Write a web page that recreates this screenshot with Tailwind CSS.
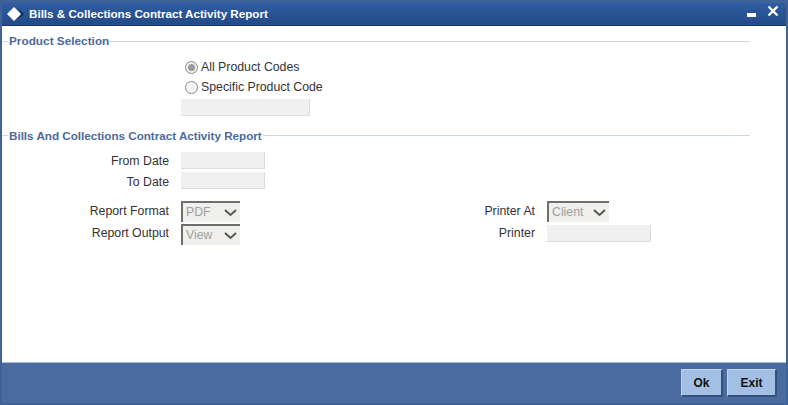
<!DOCTYPE html>
<html lang="en">
<head>
  <meta charset="UTF-8">
  <title>Bills &amp; Collections Contract Activity Report</title>
  <script src="https://cdn.jsdelivr.net/npm/@tailwindcss/browser@4"></script>
</head>
<body class="bg-white overflow-hidden font-['Liberation_Sans',Arial,sans-serif] text-[12.3px] text-[#333]">
  <div class="w-[788px] h-[405px] flex flex-col bg-[#3f6399] pt-[3px] px-[2px] pb-[2px]">

    <!-- title bar -->
    <div class="h-[23px] shrink-0 flex items-center pl-[5px] pr-[2px] bg-gradient-to-b from-[#2f5da3] to-[#234a86] border-b border-[#173564] text-white">
      <svg width="18" height="16" viewBox="0 0 18 16" class="shrink-0">
        <path d="M7 1 L14 8 L7 15 L0 8 Z" fill="#fff"/>
        <path d="M11 2.5 L17 8 L11 13.500 L14.500 8 Z" fill="#0d2a55"/>
      </svg>
      <span class="ml-[4px] font-bold text-[11.65px]">Bills &amp; Collections Contract Activity Report</span>
      <div class="ml-auto flex items-start h-full">
        <span class="block w-[9px] h-[4px] bg-white mt-[10px]"></span>
        <svg width="12" height="12" viewBox="0 0 12 12" class="ml-[11px] mt-[2px] mr-[5px]">
          <path d="M1.5 1.5 L10.5 10.500 M10.5 1.5 L1.5 10.500" stroke="#fff" stroke-width="2.4"/>
        </svg>
      </div>
    </div>

    <!-- body -->
    <div class="flex-1 bg-white pt-[8px]">
      <div class="flex items-center w-[748px] h-[14px]">
        <span class="w-[6px] h-px bg-[#cdd8e0]"></span>
        <span class="mx-[1px] pt-[2px] font-bold text-[11.8px] text-[#4b6a9b]">Product Selection</span>
        <span class="flex-1 h-px bg-[#cdd8e0]"></span>
      </div>

      <div class="ml-[179px] mt-[9px]">
        <label class="flex items-center h-[20px]">
          <span class="ml-[4px] w-[13px] h-[13px] rounded-full border border-[#8a8a8a] bg-[#f0f0f0] flex items-center justify-center">
            <span class="block w-[7px] h-[7px] rounded-full bg-[#9a9a9a]"></span>
          </span>
          <span class="ml-[3px]">All Product Codes</span>
        </label>
        <label class="flex items-center h-[20px]">
          <span class="ml-[4px] w-[13px] h-[13px] rounded-full border border-[#8a8a8a] bg-[#f4f4f4]"></span>
          <span class="ml-[3px]">Specific Product Code</span>
        </label>
        <div class="mt-[2px] w-[129px] h-[17px] bg-[#f0f0f0] border-b border-r border-[#dcdcdc]"></div>
      </div>

      <div class="flex items-center w-[748px] h-[14px] mt-[12px]">
        <span class="w-[6px] h-px bg-[#cdd8e0]"></span>
        <span class="mx-[1px] pt-[2px] font-bold text-[11.65px] text-[#4b6a9b]">Bills And Collections Contract Activity Report</span>
        <span class="flex-1 h-px bg-[#cdd8e0]"></span>
      </div>

      <div class="mt-[10px] flex flex-col gap-[3px]">
        <div class="flex items-center h-[17px]">
          <span class="w-[167px] text-right pt-[2px]">From Date</span>
          <div class="ml-[12px] w-[84px] h-[17px] bg-[#f0f0f0] border-b border-r border-[#dcdcdc]"></div>
        </div>
        <div class="flex items-center h-[17px]">
          <span class="w-[167px] text-right pt-[3px]">To Date</span>
          <div class="ml-[12px] w-[84px] h-[17px] bg-[#f0f0f0] border-b border-r border-[#dcdcdc]"></div>
        </div>
      </div>

      <div class="mt-[12px] flex">
        <div class="flex flex-col gap-[2px]">
          <div class="flex items-center h-[21px]">
            <span class="w-[167px] text-right">Report Format</span>
            <div class="ml-[12px] w-[59px] h-[21px] flex items-center justify-between bg-[#f0efeb] border-t-2 border-l-2 border-[#6e6e6e] pl-[3px] pr-[3px] text-[#a0a0a0]">
              <span>PDF</span>
              <svg width="13" height="8" viewBox="0 0 13 8"><path d="M1 1 L6.5 6 L12 1" fill="none" stroke="#555" stroke-width="2"/></svg>
            </div>
          </div>
          <div class="flex items-center h-[21px]">
            <span class="w-[167px] text-right mb-[2px]">Report Output</span>
            <div class="ml-[12px] w-[59px] h-[21px] flex items-center justify-between bg-[#f0efeb] border-t-2 border-l-2 border-[#6e6e6e] pl-[3px] pr-[3px] text-[#a0a0a0]">
              <span>View</span>
              <svg width="13" height="8" viewBox="0 0 13 8"><path d="M1 1 L6.5 6 L12 1" fill="none" stroke="#555" stroke-width="2"/></svg>
            </div>
          </div>
        </div>
        <div class="ml-[228px] flex flex-col gap-[2px]">
          <div class="flex items-center h-[21px]">
            <span class="w-[67px] text-right">Printer At</span>
            <div class="ml-[12px] w-[62px] h-[21px] flex items-center justify-between bg-[#f0efeb] border-t-2 border-l-2 border-[#6e6e6e] pl-[3px] pr-[3px] text-[#a0a0a0]">
              <span>Client</span>
              <svg width="13" height="8" viewBox="0 0 13 8"><path d="M1 1 L6.5 6 L12 1" fill="none" stroke="#555" stroke-width="2"/></svg>
            </div>
          </div>
          <div class="flex items-center h-[21px]">
            <span class="w-[67px] text-right mb-[2px]">Printer</span>
            <div class="ml-[12px] w-[104px] h-[17px] mb-[2px] bg-[#f0f0f0] border-b border-r border-[#dcdcdc]"></div>
          </div>
        </div>
      </div>
    </div>

    <!-- footer -->
    <div class="h-[41px] shrink-0 bg-[#4b6b9f] border-t border-[#a9bddc] flex items-start justify-end pt-[6px] pr-[9px] gap-[4px] text-[#111]">
      <button class="w-[42px] h-[28px] bg-[#a3c0e4] border-r-2 border-b-2 border-[#33507f] border-t border-l border-t-[#c0d4ee] border-l-[#c0d4ee] font-bold text-[12px]">Ok</button>
      <button class="w-[50px] h-[28px] bg-[#a3c0e4] border-r-2 border-b-2 border-[#33507f] border-t border-l border-t-[#c0d4ee] border-l-[#c0d4ee] font-bold text-[12px]">Exit</button>
    </div>
  </div>
</body>
</html>
